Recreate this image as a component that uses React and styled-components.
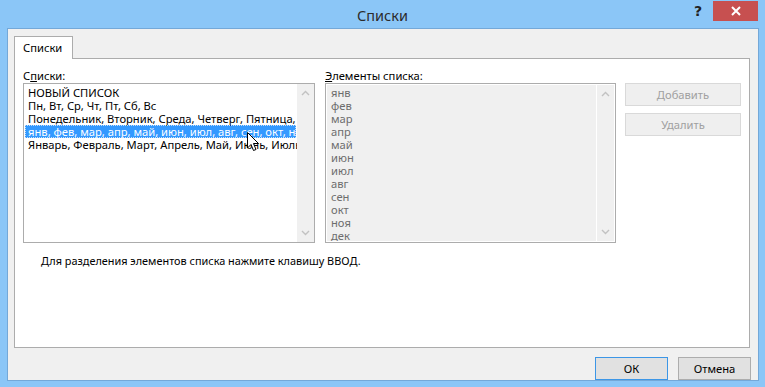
import React from "react";
import styled, { createGlobalStyle } from "styled-components";

const GlobalStyle = createGlobalStyle`
  body {
    margin: 0;
    font-family: "Noto Sans", "Liberation Sans", sans-serif;
  }
`;

const Window = styled.div`
  position: relative;
  width: 765px;
  height: 387px;
  background: #8bc6f7;
  display: flex;
  flex-direction: column;
  box-sizing: border-box;
  overflow: hidden;
`;

const TitleBar = styled.div`
  height: 30px;
  display: grid;
  grid-template-columns: 1fr auto 1fr;
  align-items: start;
`;

const Title = styled.div`
  padding-top: 5px;
  font-size: 14.5px;
  color: #2b2b2b;
  line-height: 20px;
`;

const Controls = styled.div`
  display: flex;
  justify-content: flex-end;
  align-items: flex-start;
  padding-right: 7px;
`;

const HelpBtn = styled.div`
  width: 26px;
  height: 21px;
  margin-top: 1px;
  font-family: "DejaVu Sans", sans-serif;
  font-weight: bold;
  font-size: 14px;
  color: #222;
  line-height: 20px;
  text-align: center;
  margin-right: 2px;
`;

const CloseBtn = styled.div`
  width: 45px;
  height: 20px;
  margin-top: 1px;
  background: #c75050;
  display: flex;
  align-items: center;
  justify-content: center;
`;

const Client = styled.div`
  flex: 1;
  margin: 0 6px 6px 7px;
  border: 1px solid #74a8d8;
  background: #f0f0f0;
  padding: 7px 8px 0 6px;
  display: flex;
  flex-direction: column;
  font-size: 11.2px;
`;

const TabStrip = styled.div`
  display: flex;
  position: relative;
  z-index: 1;
  margin-bottom: -1px;
`;

const Tab = styled.div`
  width: 49px;
  height: 22px;
  background: #fff;
  border: 1px solid #acacac;
  border-bottom: none;
  line-height: 22px;
  padding-left: 8px;
  color: #000;
  box-sizing: content-box;
`;

const Panel = styled.div`
  height: 279px;
  background: #fff;
  border: 1px solid #acacac;
  padding: 9px 8px 0 8px;
  box-sizing: content-box;
  display: flex;
  flex-direction: column;
`;

const Row = styled.div`
  display: flex;
  align-items: flex-start;
`;

const Column = styled.div`
  display: flex;
  flex-direction: column;
  width: ${(p) => p.$w}px;
  margin-right: ${(p) => p.$mr || 0}px;
`;

const Label = styled.div`
  line-height: 15px;
  color: #000;
  u {
    text-decoration: underline;
  }
`;

const Spacer = styled.div`
  height: 15px;
`;

const ListBox = styled.div`
  height: 158px;
  border: 1px solid #acacac;
  background: #fff;
  display: flex;
  padding: ${(p) => (p.$disabled ? "1px" : "0")};
  box-sizing: content-box;
  height: ${(p) => (p.$disabled ? 156 : 158)}px;
`;

const Items = styled.div`
  flex: 1;
  overflow: hidden;
  padding: ${(p) => (p.$disabled ? "1px 1px 0 1px" : "2px 1px 0 1px")};
  background: ${(p) => (p.$disabled ? "#f0f0f0" : "#fff")};
  margin-right: ${(p) => (p.$disabled ? "1px" : "0")};
`;

const Item = styled.div`
  height: 13px;
  line-height: 13px;
  white-space: nowrap;
  padding-left: 3px;
  box-sizing: border-box;
  color: ${(p) => (p.$disabled ? "#6d6d6d" : p.$selected ? "#fff" : "#000")};
  background: ${(p) => (p.$selected ? "#3399ff" : "transparent")};
  outline: ${(p) => (p.$selected ? "1px dotted #c8e0f8" : "none")};
  outline-offset: -1px;
`;

const ScrollBar = styled.div`
  width: 17px;
  background: #f0f0f0;
  display: flex;
  flex-direction: column;
  justify-content: space-between;
  align-items: center;
  padding: 6px 0;
  box-sizing: border-box;
`;

const Button = styled.div`
  width: 114px;
  height: 21px;
  border: 1px solid ${(p) => (p.$default ? "#3c96e6" : p.$disabled ? "#d9d9d9" : "#adadad")};
  background: ${(p) => (p.$disabled ? "#efefef" : "#e1e1e1")};
  color: ${(p) => (p.$disabled ? "#a0a0a0" : "#000")};
  line-height: 21px;
  text-align: center;
  margin-bottom: 7px;
`;

const Hint = styled.div`
  font-size: 10.9px;
  line-height: 15px;
  margin: 10px 0 0 18px;
  color: #000;
`;

const Footer = styled.div`
  display: flex;
  justify-content: flex-end;
  gap: 10px;
  padding: 9px 0 0 0;
  margin-right: -1px;
`;

const FooterButton = styled(Button)`
  width: 71px;
  margin-bottom: 0;
`;

const Cursor = styled.svg`
  position: absolute;
  left: 247px;
  top: 132px;
`;

const Chevron = ({ up }) => (
  <svg width="9" height="6" viewBox="0 0 9 6">
    <path
      d={up ? "M1 5 L4.5 1.5 L8 5" : "M1 1 L4.5 4.5 L8 1"}
      fill="none"
      stroke="#c2c2c2"
      strokeWidth="1.4"
    />
  </svg>
);

const lists = [
  "НОВЫЙ СПИСОК",
  "Пн, Вт, Ср, Чт, Пт, Сб, Вс",
  "Понедельник, Вторник, Среда, Четверг, Пятница, Суббота, Воскресенье",
  "янв, фев, мар, апр, май, июн, июл, авг, сен, окт, ноя, дек",
  "Январь, Февраль, Март, Апрель, Май, Июнь, Июль, Август, Сентябрь, Октябрь, Ноябрь, Декабрь",
];

const months = ["янв", "фев", "мар", "апр", "май", "июн", "июл", "авг", "сен", "окт", "ноя", "дек"];

export default function App() {
  return (
    <>
      <GlobalStyle />
      <Window>
        <TitleBar>
          <div />
          <Title>Списки</Title>
          <Controls>
            <HelpBtn>?</HelpBtn>
            <CloseBtn>
              <svg width="10" height="10" viewBox="0 0 10 10">
                <path d="M1 1 L9 9 M9 1 L1 9" stroke="#fff" strokeWidth="2" />
              </svg>
            </CloseBtn>
          </Controls>
        </TitleBar>
        <Client>
          <TabStrip>
            <Tab>Списки</Tab>
          </TabStrip>
          <Panel>
            <Row>
              <Column $w={292} $mr={10}>
                <Label>
                  С<u>п</u>иски:
                </Label>
                <ListBox>
                  <Items>
                    {lists.map((l, i) => (
                      <Item key={i} $selected={i === 3}>
                        {l}
                      </Item>
                    ))}
                  </Items>
                  <ScrollBar>
                    <Chevron up />
                    <Chevron />
                  </ScrollBar>
                </ListBox>
              </Column>
              <Column $w={291} $mr={9}>
                <Label>
                  <u>Э</u>лементы списка:
                </Label>
                <ListBox $disabled>
                  <Items $disabled>
                    {months.map((m) => (
                      <Item key={m} $disabled>
                        {m}
                      </Item>
                    ))}
                  </Items>
                  <ScrollBar>
                    <Chevron up />
                    <Chevron />
                  </ScrollBar>
                </ListBox>
              </Column>
              <Column $w={116}>
                <Spacer />
                <Button $disabled>Добавить</Button>
                <Button $disabled>Удалить</Button>
              </Column>
            </Row>
            <Hint>Для разделения элементов списка нажмите клавишу ВВОД.</Hint>
          </Panel>
          <Footer>
            <FooterButton $default>ОК</FooterButton>
            <FooterButton>Отмена</FooterButton>
          </Footer>
        </Client>
        <Cursor width="13" height="20" viewBox="0 0 13 20">
          <path
            d="M0.5 0.5 L0.5 16 L4 12.5 L6.5 18.5 L9 17.5 L6.5 11.5 L11.5 11.5 Z"
            fill="#fff"
            stroke="#000"
            strokeWidth="1"
          />
        </Cursor>
      </Window>
    </>
  );
}
